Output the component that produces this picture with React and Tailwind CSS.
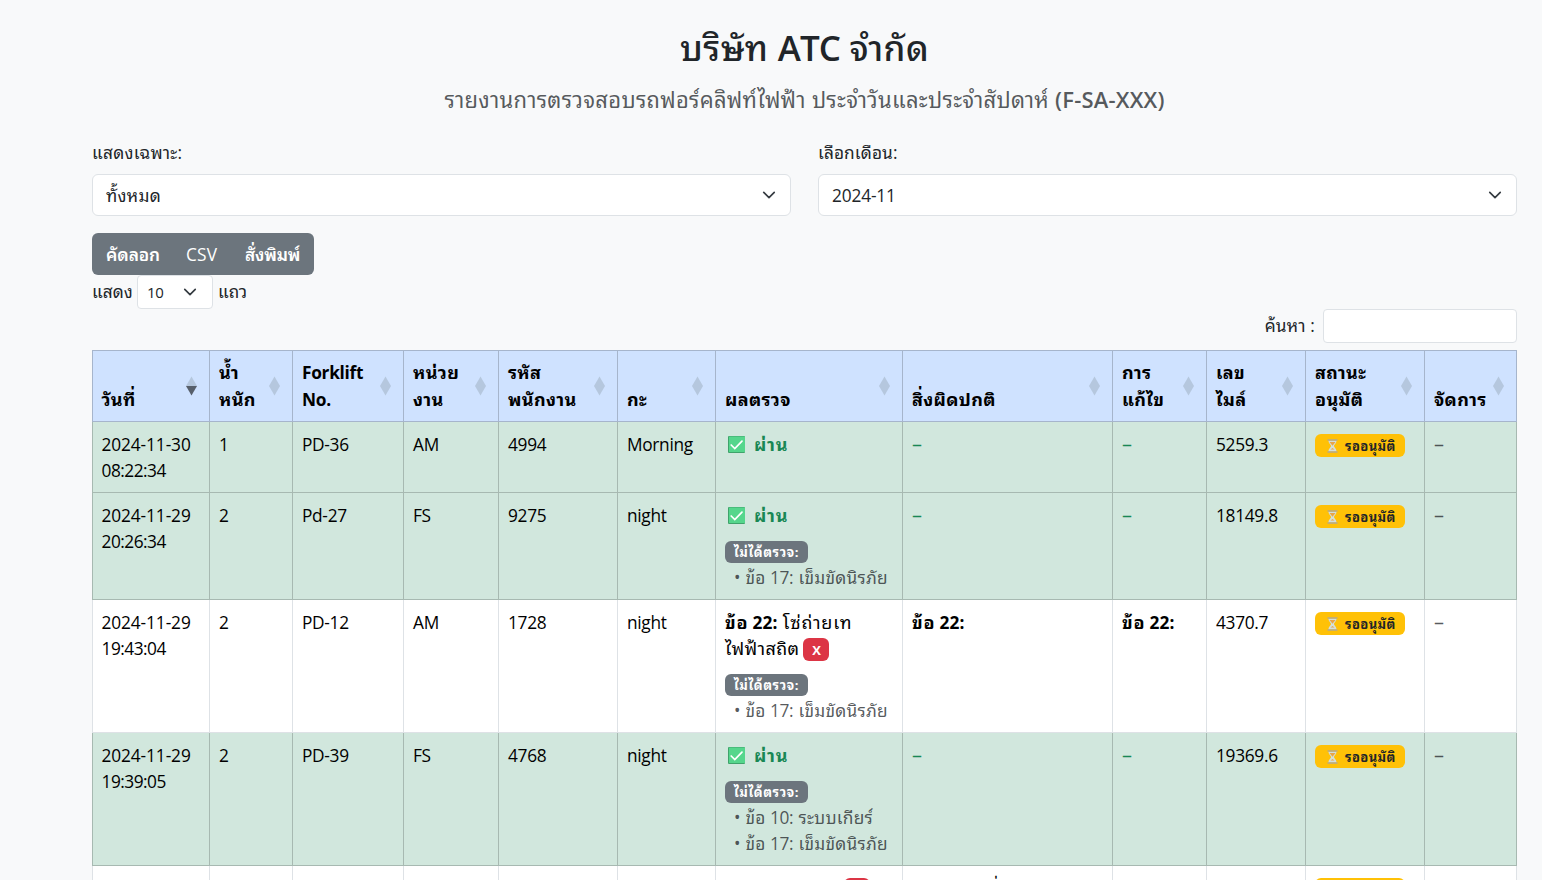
import React from "react";

function Chevron() {
  return (
    <svg viewBox="0 0 16 16" className="mr-[1px] h-[14px] w-[14px]" fill="none" stroke="#343a40" strokeWidth="1.900" strokeLinecap="round" strokeLinejoin="round">
      <path d="m2 5 6 6 6-6" />
    </svg>
  );
}

function SortIcon({ active }) {
  return (
    <svg width="11" height="20" viewBox="0 0 11 20" className="mt-[25px] shrink-0">
      <path d="M5.5 0.5 11 10H0Z" fill="#b5c7de" />
      <path d="M0 10H11L5.5 19.5Z" fill={active ? "#575f6b" : "#b5c7de"} />
    </svg>
  );
}

function CheckEmoji() {
  return (
    <svg width="17" height="17" viewBox="0 0 17 17" className="ml-[3px] mr-[9px] mt-[4px] shrink-0">
      <rect width="17" height="17" rx="1" fill="#3fa36b" />
      <rect x="1" y="0.500" width="16" height="15.500" rx="0.5" fill="#55d68c" />
      <path d="m3.2 9 3.6 3.6 7.2-7.4" fill="none" stroke="#fff" strokeWidth="1.7" strokeLinecap="round" />
    </svg>
  );
}

function Hourglass() {
  return (
    <svg width="11" height="14" viewBox="0 0 11 14" className="mt-[1px] shrink-0">
      <path d="M1.5 1.5h8c0 3-2.5 4-2.5 5.5s2.5 2.5 2.5 5.5h-8c0-3 2.5-4 2.5-5.5s-2.5-2.5-2.5-5.5z" fill="#d3dfdc" />
      <path d="M2.5 3h6L5.5 6.8ZM5.5 9l2 1.500h-4z" fill="#eaa548" />
      <path d="M0.5 1h10M0.5 13h10" stroke="#b5a98c" strokeWidth="1.500" />
    </svg>
  );
}

function Waiting() {
  return (
    <span className="mt-[2px] flex h-[23px] w-[90px] items-center rounded-md bg-[#ffc107] pl-[12px] text-[13px] font-bold text-[#212529]">
      <Hourglass />
      <span className="ml-[7px] whitespace-nowrap pt-[1px] leading-none tracking-[0.400px]">รออนุมัติ</span>
    </span>
  );
}

function Pass() {
  return (
    <div className="flex h-[26px] font-bold text-[#198754]">
      <CheckEmoji />
      <span className="text-[18px] leading-[24.400px] tracking-[0.700px]">ผ่าน</span>
    </div>
  );
}

function Unchecked({ items }) {
  return (
    <div className="mt-[12px] text-[#212529bf]">
      <span className="flex h-[22px] w-[83px] items-center justify-center whitespace-nowrap rounded-md bg-[#6c757d] text-[13px] font-bold leading-none tracking-[0.600px] text-white">
        ไม่ได้ตรวจ:
      </span>
      <div className="pl-[9px] pt-[2px]">
        {items.map(([n, t]) => (
          <div key={n} className="h-[26.400px] whitespace-nowrap">
            • <span className="ml-[1px] tracking-[0.300px]">ข้อ</span> {n}: <span className="ml-[1px] tracking-[0.220px]">{t}</span>
          </div>
        ))}
      </div>
    </div>
  );
}

const headers = [
  ["วันที่"],
  ["น้ำ", "หนัก"],
  ["Forklift", "No."],
  ["หน่วย", "งาน"],
  ["รหัส", "พนักงาน"],
  ["กะ"],
  ["ผลตรวจ"],
  ["สิ่งผิดปกติ"],
  ["การ", "แก้ไข"],
  ["เลข", "ไมล์"],
  ["สถานะ", "อนุมัติ"],
  ["จัดการ"],
];

const belt = [17, "เข็มขัดนิรภัย"];
const gear = [10, "ระบบเกียร์"];

const rows = [
  { h: "h-[71px]", ok: true, date: ["2024-11-30", "08:22:34"], cells: ["1", "PD-36", "AM", "4994", "Morning"], mile: "5259.3", skipped: [] },
  { h: "h-[107px]", ok: true, date: ["2024-11-29", "20:26:34"], cells: ["2", "Pd-27", "FS", "9275", "night"], mile: "18149.8", skipped: [belt] },
  { h: "h-[133px]", ok: false, date: ["2024-11-29", "19:43:04"], cells: ["2", "PD-12", "AM", "1728", "night"], mile: "4370.7", skipped: [belt] },
  { h: "h-[133px]", ok: true, date: ["2024-11-29", "19:39:05"], cells: ["2", "PD-39", "FS", "4768", "night"], mile: "19369.6", skipped: [gear, belt] },
];

function Item22() {
  return (
    <b className="leading-[24.400px]"><span className="text-[18px] tracking-[0.800px]">ข้อ</span> <span className="tracking-[0.100px]">22:</span></b>
  );
}

function Dash({ green }) {
  return <div className={green ? "text-[20px] leading-[24.400px] text-[#198754]" : "text-[20px] leading-[24.400px] text-[#212529bf]"}>–</div>;
}

function Row({ r }) {
  const c = r.ok
    ? "border-r border-b first:border-l first:pl-[8.500px] border-[#a7b9b1] bg-[#d1e7dd] pl-[9px] pt-[10px] pb-0 align-top"
    : "border-r border-b first:border-l first:pl-[8.500px] border-[#dee2e6] bg-white pl-[9px] pt-[10px] pb-0 align-top";
  return (
    <tr className={r.h}>
      <td className={c}><div className="tracking-[-0.100px]">{r.date[0]}</div><div className="tracking-[-0.500px]">{r.date[1]}</div></td>
      {r.cells.map((t, i) => <td key={i} className={c}>{t}</td>)}
      <td className={c}>
        {r.ok ? <Pass /> : (
          <div className="h-[52px] whitespace-nowrap">
            <div className="h-[26px] leading-[24.400px]"><Item22 /> <span className="ml-[1px] text-[18px] tracking-[0.800px]">โซ่ถ่ายเท</span></div>
            <div className="flex h-[26px] items-center">
              <span className="pb-[2px] text-[18px] tracking-[0.400px]">ไฟฟ้าสถิต</span>
              <span className="ml-[4px] flex h-[23px] w-[26px] items-center justify-center rounded-md bg-[#dc3545] pt-[2px] text-[13px] font-bold text-white">X</span>
            </div>
          </div>
        )}
        {r.skipped.length > 0 && <Unchecked items={r.skipped} />}
      </td>
      <td className={c}>{r.ok ? <Dash green /> : <div className="leading-[24.400px]"><Item22 /></div>}</td>
      <td className={c}>{r.ok ? <Dash green /> : <div className="leading-[24.400px]"><Item22 /></div>}</td>
      <td className={c}>{r.mile}</td>
      <td className={c}><Waiting /></td>
      <td className={c}><Dash /></td>
    </tr>
  );
}

export default function App() {
  const lc = "border-r first:border-l border-[#dee2e6] bg-white pl-[9px] pt-[9px] pb-0 align-top";
  return (
    <div className="h-[880px] overflow-hidden bg-[#f8f9fa] pl-[92px] pr-[25px] font-['Open_Sans','Noto_Sans_Thai_Looped','Loma','Noto_Sans_Thai','Noto_Sans',sans-serif] text-[17.300px] leading-[26.400px] tracking-[-0.300px] text-[#212529]">
      <h1 className="h-[48px] pt-[26px] text-center text-[35px] leading-[44px] tracking-[0.400px]">
        <span className="font-medium">บริษัท</span> <span className="font-semibold tracking-[-1px]">ATC</span> <span className="font-medium">จำกัด</span>
      </h1>
      <h2 className="mt-[37px] text-center text-[22px] leading-[28px] tracking-[0.280px] text-[#212529bf]">
        รายงานการตรวจสอบรถฟอร์คลิฟท์ไฟฟ้า ประจำวันและประจำสัปดาห์ <span className="font-semibold tracking-[0.200px]">(F-SA-XXX)</span>
      </h2>
      <div className="mt-[27px] flex gap-[27px]">
        {[["แสดงเฉพาะ:", "ทั้งหมด"], ["เลือกเดือน:", "2024-11"]].map(([l, v], i) => (
          <div key={l} className="w-[699px]">
            <div className={i === 0 ? "h-[34px] tracking-[0.250px]" : "h-[34px] tracking-[0.100px]"}>{l}</div>
            <div className="flex h-[42px] items-center justify-between rounded-md border border-[#dee2e6] bg-white pl-[13px] pr-[13px]">
              <span className={i === 0 ? "pt-[2px] tracking-[0.300px]" : "pt-[2px] tracking-[-0.150px]"}>{v}</span>
              <Chevron />
            </div>
          </div>
        ))}
      </div>
      <div className="mt-[17px] flex h-[42px] w-[222px] items-center rounded-md bg-[#6c757d] pl-[14px] text-white">
        <span className="w-[80px] pt-[2px] font-semibold tracking-[-0.100px]">คัดลอก</span>
        <span className="w-[59px] pt-[2px] tracking-[0.200px]">CSV</span>
        <span className="pt-[2px] font-semibold tracking-[-0.200px]">สั่งพิมพ์</span>
      </div>
      <div className="flex h-[34px] items-center">
        <span className="w-[45px] tracking-[0px]">แสดง</span>
        <div className="flex h-[34px] w-[76px] items-center justify-between rounded border border-[#dee2e6] bg-white pl-[9px] pr-[14px] text-[15px]">
          10
          <Chevron />
        </div>
        <span className="ml-[5px] tracking-[-0.100px]">แถว</span>
      </div>
      <div className="flex h-[34px] items-center justify-end">
        <span className="tracking-[0.150px]">ค้นหา :</span>
        <div className="ml-[8px] h-[34px] w-[194px] rounded border border-[#dee2e6] bg-white" />
      </div>
      <table className="mt-[7px] w-[1425px] table-fixed border-separate border-spacing-0 text-black">
        <colgroup>
          <col className="w-[118px]" /><col className="w-[83px]" /><col className="w-[111px]" /><col className="w-[95px]" />
          <col className="w-[119px]" /><col className="w-[98px]" /><col className="w-[187px]" /><col className="w-[210px]" />
          <col className="w-[94px]" /><col className="w-[99px]" /><col className="w-[119px]" /><col className="w-[92px]" />
        </colgroup>
        <thead>
          <tr className="h-[72px]">
            {headers.map((h, i) => (
              <th key={i} className="border-t border-r border-b border-[#a6b5cc] bg-[#cfe2ff] p-0 pl-[9px] text-left font-bold first:border-l first:pl-[8.500px]">
                <div className="flex h-[70px] justify-between pr-[12px]">
                  <div className={i === 2 ? "flex h-full flex-col justify-end pb-[8px]" : "flex h-full flex-col justify-end pb-[9px]"}>
                    {h.map((l) => (
                      <div key={l} className={i === 2 ? "h-[26.500px] whitespace-nowrap" : "h-[26.500px] whitespace-nowrap text-[18px] tracking-[0.350px]"}>{l}</div>
                    ))}
                  </div>
                  <SortIcon active={i === 0} />
                </div>
              </th>
            ))}
          </tr>
        </thead>
        <tbody>
          {rows.map((r, i) => <Row key={i} r={r} />)}
          <tr className="h-[133px]">
            {Array.from({ length: 12 }, (_, i) => (
              <td key={i} className={lc}>
                {i === 6 && <div className="ml-[119px] mt-[3px] h-[23px] w-[26px] rounded-md bg-[#dc3545]" />}
                {i === 7 && <div className="pl-[75px]">ที่</div>}
                {i === 10 && <div className="mt-[3px] h-[23px] w-[90px] rounded-md bg-[#ffc107]" />}
              </td>
            ))}
          </tr>
        </tbody>
      </table>
    </div>
  );
}
